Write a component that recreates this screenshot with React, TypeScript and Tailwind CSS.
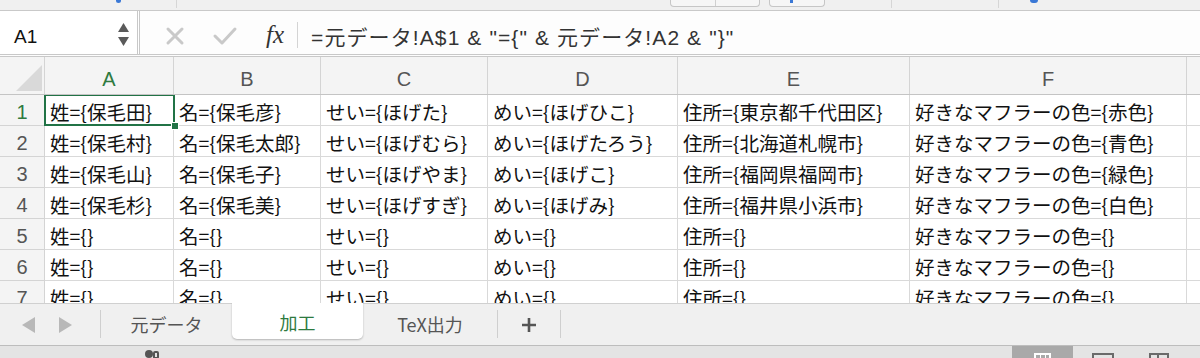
import React from 'react';

const COLS = [
    { key: 'A', w: 'w-[129px]' },
    { key: 'B', w: 'w-[147px]' },
    { key: 'C', w: 'w-[167px]' },
    { key: 'D', w: 'w-[190px]' },
    { key: 'E', w: 'w-[232px]' },
    { key: 'F', w: 'w-[277px]' },
];

const DATA: string[][] = [
    ['姓={保毛田}', '名={保毛彦}', 'せい={ほげた}', 'めい={ほげひこ}', '住所={東京都千代田区}', '好きなマフラーの色={赤色}'],
    ['姓={保毛村}', '名={保毛太郎}', 'せい={ほげむら}', 'めい={ほげたろう}', '住所={北海道札幌市}', '好きなマフラーの色={青色}'],
    ['姓={保毛山}', '名={保毛子}', 'せい={ほげやま}', 'めい={ほげこ}', '住所={福岡県福岡市}', '好きなマフラーの色={緑色}'],
    ['姓={保毛杉}', '名={保毛美}', 'せい={ほげすぎ}', 'めい={ほげみ}', '住所={福井県小浜市}', '好きなマフラーの色={白色}'],
    ['姓={}', '名={}', 'せい={}', 'めい={}', '住所={}', '好きなマフラーの色={}'],
    ['姓={}', '名={}', 'せい={}', 'めい={}', '住所={}', '好きなマフラーの色={}'],
    ['姓={}', '名={}', 'せい={}', 'めい={}', '住所={}', '好きなマフラーの色={}'],
];

const FORMULA = '=元データ!A$1 & "={" & 元データ!A2 & "}"';

const jp = { fontFamily: '"Noto Sans CJK JP", "Liberation Sans", sans-serif' };
const latin = { fontFamily: '"Liberation Sans", "Noto Sans CJK JP", sans-serif' };

// Thin strip of the ribbon that is cut off at the top
const RibbonStrip: React.FC = () => (
    <div className="relative h-[11px] bg-[#f0f0f0] border-b border-[#c9c9c9]">
        <div className="absolute left-[116px] top-0 w-[5px] h-[3px] rounded-b-full bg-[#3a78d6]" />
        <div className="absolute left-[176px] top-0 w-px h-[8px] bg-[#d6d6d6]" />
        <div className="absolute left-[670px] top-0 w-[90px] h-[7px] border border-t-0 border-[#c6c6c6] rounded-b-[4px] bg-[#f6f6f6] flex">
            <div className="w-[45px] border-r border-[#d0d0d0]" />
        </div>
        <div className="absolute left-[769px] top-0 w-[56px] h-[7px] border border-t-0 border-[#c6c6c6] rounded-b-[4px] bg-[#f6f6f6]">
            <div className="absolute left-[20px] top-0 w-[3px] h-[3px] bg-[#3a78d6]" />
        </div>
        <div className="absolute left-[891px] top-0 w-px h-[8px] bg-[#d6d6d6]" />
        <div className="absolute left-[998px] top-0 w-px h-[8px] bg-[#d6d6d6]" />
        <div className="absolute left-[1030px] top-0 w-[8px] h-[3px] rounded-b-full bg-[#3a78d6]" />
    </div>
);

const FormulaBar: React.FC = () => (
    <div className="flex h-[46px] border-b-[3px] border-double border-[#c8c8c8] bg-[#fdfdfd]">
        <div className="flex justify-between w-[140px] bg-white pl-[14px] pr-[8px] border-r-[3px] border-double border-[#c8c8c8]">
            <div className="flex items-center pt-[10px]">
                <span className="text-[19px] text-[#111]" style={latin}>A1</span>
            </div>
            <div className="flex flex-col justify-center items-center gap-[5px] pt-[3px]">
                <svg width="11" height="9" viewBox="0 0 11 9"><path d="M5.5 0 L11 9 L0 9 Z" fill="#5a5a5a" /></svg>
                <svg width="11" height="9" viewBox="0 0 11 9"><path d="M0 0 L11 0 L5.5 9 Z" fill="#5a5a5a" /></svg>
            </div>
        </div>
        <div className="flex items-center pl-[25px] pt-[10px]">
            <svg className="-mt-[4px]" width="20" height="20" viewBox="0 0 20 20">
                <path d="M3 3 L17 17 M17 3 L3 17" stroke="#c9c9c9" strokeWidth="3" strokeLinecap="round" />
            </svg>
            <svg className="ml-[27px] -mt-[4px]" width="26" height="20" viewBox="0 0 26 20">
                <path d="M3 10 L10 17 L23 3" stroke="#c9c9c9" strokeWidth="3" fill="none" strokeLinecap="round" strokeLinejoin="round" />
            </svg>
            <span className="ml-[28px] -mt-[6px] text-[25px] italic text-[#333] leading-none" style={{ fontFamily: '"Liberation Serif", serif' }}>fx</span>
            <div className="ml-[13px] -mt-[6px] w-px h-[26px] bg-[#d4d4d4]" />
            <span className="ml-[13px] text-[21px] tracking-[1.1px] text-[#333] whitespace-pre" style={latin}>{FORMULA}</span>
        </div>
    </div>
);

const HeaderRow: React.FC = () => (
    <div className="flex h-[38px] bg-[#f4f4f4] border-b border-[#c4c4c4]">
        <div className="relative w-[45px] shrink-0 border-r border-[#d4d4d4]">
            <svg className="absolute right-[2px] bottom-[3px]" width="26" height="26" viewBox="0 0 26 26">
                <path d="M26 0 L26 26 L0 26 Z" fill="#d9d9d9" />
            </svg>
        </div>
        {COLS.map(c => (
            <div
                key={c.key}
                className={`${c.w} shrink-0 flex items-center justify-center pt-[7px] border-r border-[#d4d4d4] text-[20px] ${c.key === 'A' ? 'text-[#2e7a3f]' : 'text-[#555]'}`}
                style={latin}
            >
                {c.key}
            </div>
        ))}
        <div className="flex-1" />
    </div>
);

const Grid: React.FC = () => (
    <div className="relative h-[208px] overflow-hidden bg-white">
        {DATA.map((row, r) => (
            <div key={r} className="flex h-[31px]">
                <div
                    className={`w-[45px] shrink-0 flex items-center justify-center pt-[3px] bg-[#f4f4f4] border-r border-b border-[#d4d4d4] text-[20px] ${r === 0 ? 'text-[#2e7a3f]' : 'text-[#555]'}`}
                    style={latin}
                >
                    {r + 1}
                </div>
                {row.map((cell, c) => (
                    <div
                        key={c}
                        className={`${COLS[c].w} shrink-0 flex items-center pl-[5px] pt-[3px] border-r border-b border-[#d9d9d9] text-[19.5px] text-[#111] whitespace-nowrap overflow-hidden`}
                        style={jp}
                    >
                        {cell}
                    </div>
                ))}
                <div className="flex-1 border-b border-[#d9d9d9]" />
            </div>
        ))}
        {/* selected cell A1 */}
        <div className="absolute left-[44px] top-[-1px] w-[131px] h-[32px] border-2 border-[#217346] pointer-events-none" />
        <div className="absolute left-[171px] top-[27px] w-[8px] h-[8px] bg-[#217346] border border-white" />
    </div>
);

const TabBar: React.FC = () => (
    <div className="flex h-[43px] bg-[#f0f0f0] border-t border-[#d0d0d0] border-b border-b-[#bdbdbd]">
        <div className="flex items-center w-[100px] pl-[22px] gap-[24px]">
            <svg width="13" height="16" viewBox="0 0 13 16"><path d="M13 0 L13 16 L0 8 Z" fill="#b8b8b8" /></svg>
            <svg width="13" height="16" viewBox="0 0 13 16"><path d="M0 0 L0 16 L13 8 Z" fill="#b8b8b8" /></svg>
        </div>
        <div className="w-px h-[28px] mt-[6px] bg-[#cfcfcf]" />
        <div className="w-[131px] flex items-center justify-center text-[18px] text-[#555]" style={jp}>元データ</div>
        <div className="w-[131px] h-[36px] -mt-px flex items-center justify-center pt-[3px] bg-white rounded-b-[5px] shadow-[0_1px_2px_rgba(0,0,0,0.25)] text-[18px] text-[#2e7a3f]" style={jp}>加工</div>
        <div className="w-[134px] flex items-center justify-center text-[18px] text-[#555]" style={jp}>TeX出力</div>
        <div className="w-px h-[28px] mt-[6px] bg-[#cfcfcf]" />
        <div className="w-[62px] flex items-center justify-center">
            <svg width="16" height="16" viewBox="0 0 16 16"><path d="M8 1 L8 15 M1 8 L15 8" stroke="#555" strokeWidth="2.6" /></svg>
        </div>
        <div className="w-px h-[28px] mt-[6px] bg-[#cfcfcf]" />
        <div className="flex-1" />
    </div>
);

const StatusBar: React.FC = () => (
    <div className="relative h-[12px] bg-[#e4e4e4] overflow-hidden">
        <div className="absolute left-[145px] top-[4px] w-[8px] h-[8px] rounded-full bg-[#555]" />
        <div className="absolute left-[153px] top-[5px] w-[6px] h-[8px] border-2 border-[#555] rounded-[2px]" />
        <div className="absolute left-[1012px] top-0 w-[61px] h-[12px] bg-[#a9a9a9]">
            <div className="absolute left-[22px] top-[7px] w-[17px] h-[8px] border-2 border-white flex">
                <div className="w-[5px] border-r border-white" />
                <div className="w-[5px] border-r border-white" />
            </div>
        </div>
        <div className="absolute left-[1092px] top-[7px] w-[22px] h-[8px] border-2 border-[#6a6a6a]" />
        <div className="absolute left-[1149px] top-[7px] w-[20px] h-[8px] border-2 border-[#6a6a6a] flex">
            <div className="w-[8px] border-r-2 border-[#6a6a6a]" />
        </div>
    </div>
);

const App: React.FC = () => (
    <div className="w-[1200px] h-[358px] overflow-hidden bg-[#f0f0f0]">
        <RibbonStrip />
        <FormulaBar />
        <HeaderRow />
        <Grid />
        <TabBar />
        <StatusBar />
    </div>
);

export default App;
